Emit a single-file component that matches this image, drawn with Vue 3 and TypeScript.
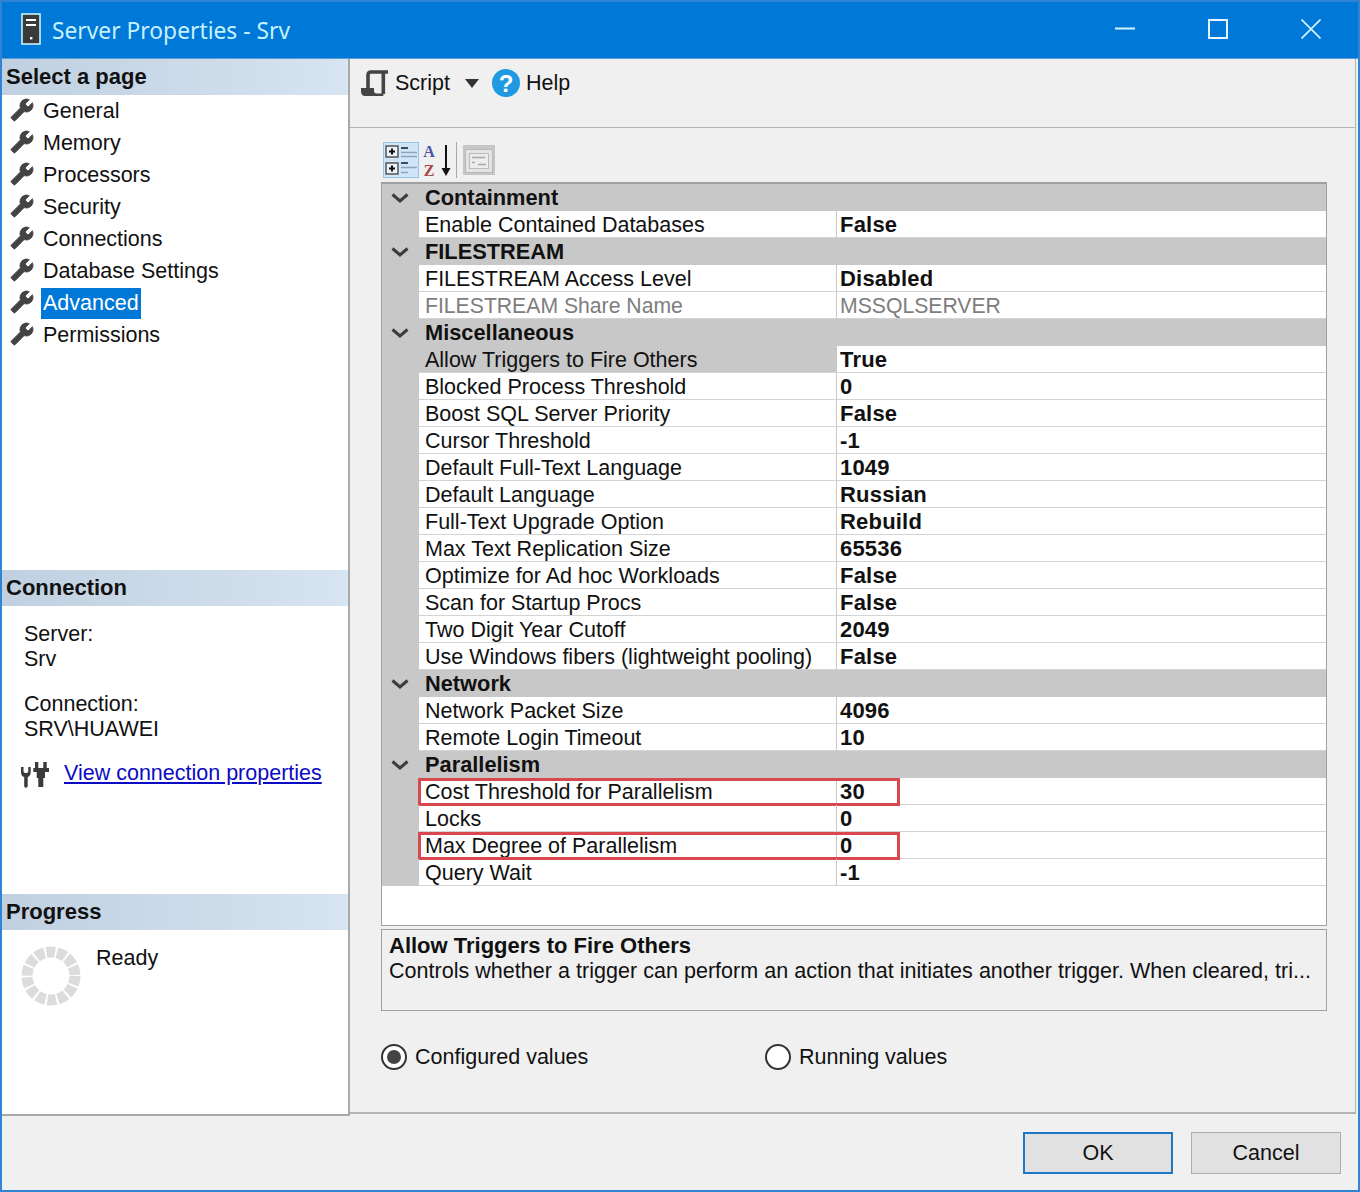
<script setup lang="ts">
type Row = { name: string; value?: string; cat?: boolean; disabled?: boolean; selected?: boolean; mark?: boolean };

const pages: string[] = ['General', 'Memory', 'Processors', 'Security', 'Connections', 'Database Settings', 'Advanced', 'Permissions'];

const rows: Row[] = [
  { name: 'Containment', cat: true },
  { name: 'Enable Contained Databases', value: 'False' },
  { name: 'FILESTREAM', cat: true },
  { name: 'FILESTREAM Access Level', value: 'Disabled' },
  { name: 'FILESTREAM Share Name', value: 'MSSQLSERVER', disabled: true },
  { name: 'Miscellaneous', cat: true },
  { name: 'Allow Triggers to Fire Others', value: 'True', selected: true },
  { name: 'Blocked Process Threshold', value: '0' },
  { name: 'Boost SQL Server Priority', value: 'False' },
  { name: 'Cursor Threshold', value: '-1' },
  { name: 'Default Full-Text Language', value: '1049' },
  { name: 'Default Language', value: 'Russian' },
  { name: 'Full-Text Upgrade Option', value: 'Rebuild' },
  { name: 'Max Text Replication Size', value: '65536' },
  { name: 'Optimize for Ad hoc Workloads', value: 'False' },
  { name: 'Scan for Startup Procs', value: 'False' },
  { name: 'Two Digit Year Cutoff', value: '2049' },
  { name: 'Use Windows fibers (lightweight pooling)', value: 'False' },
  { name: 'Network', cat: true },
  { name: 'Network Packet Size', value: '4096' },
  { name: 'Remote Login Timeout', value: '10' },
  { name: 'Parallelism', cat: true },
  { name: 'Cost Threshold for Parallelism', value: '30', mark: true },
  { name: 'Locks', value: '0' },
  { name: 'Max Degree of Parallelism', value: '0', mark: true },
  { name: 'Query Wait', value: '-1' },
];

const wrench =
  'M22.7 19l-9.1-9.1c.9-2.3.4-5-1.5-6.9-2-2-5-2.4-7.4-1.3L9 6 6 9 1.6 4.7C.4 7.1.9 10.1 2.9 12.1c1.9 1.9 4.6 2.4 6.9 1.5l9.1 9.1c.4.4 1 .4 1.4 0l2.3-2.3c.5-.4.5-1.1.1-1.4z';
</script>

<template>
  <div class="window">
    <header class="titlebar">
      <svg class="server-icon" width="20" height="32" viewBox="0 0 20 32">
        <rect x="1" y="1" width="18" height="30" fill="#3a3a3a" stroke="#c9f3ff" stroke-width="1.6" />
        <rect x="5" y="6" width="10" height="2" fill="#fff" />
        <rect x="5" y="11" width="10" height="2" fill="#fff" />
        <rect x="9" y="24" width="2.4" height="2.4" fill="#fff" />
      </svg>
      <span class="title-text">Server Properties - Srv</span>
      <div class="caption">
        <svg class="cap" width="20" height="20" viewBox="0 0 20 20"><path d="M0 9.5H20" stroke="#d5f3ff" stroke-width="2" /></svg>
        <svg class="cap" width="20" height="20" viewBox="0 0 20 20"><rect x="1" y="1" width="18" height="18" fill="none" stroke="#e3f7ff" stroke-width="2" /></svg>
        <svg class="cap" width="20" height="20" viewBox="0 0 20 20"><path d="M.5.5L19.5 19.5M19.5.5L.5 19.5" stroke="#d5f3ff" stroke-width="1.7" /></svg>
      </div>
    </header>

    <div class="main">
      <aside class="left">
        <div class="sec-head">Select a page</div>
        <ul class="pages">
          <li v-for="p in pages" :key="p" class="page">
            <svg class="wrench" width="24" height="24" viewBox="0 0 24 24"><path :d="wrench" fill="#444" stroke="#444" stroke-width=".8" transform="translate(24 0) scale(-1 1)" /></svg>
            <span class="page-name" :class="{ active: p === 'Advanced' }">{{ p }}</span>
          </li>
        </ul>

        <div class="sec-head">Connection</div>
        <div class="conn">
          <div>Server:</div>
          <div>Srv</div>
          <div class="conn-gap">Connection:</div>
          <div>SRV\HUAWEI</div>
          <div class="conn-link">
            <svg width="29" height="28" viewBox="0 0 29 28">
              <path d="M0 6h2.500v4c0 1.500 1 2 2.400 2s2.400-.5 2.400-2V6h2.400v5c0 3-1.300 4.500-3 5V25a1.700 1.700 0 0 1-3.500 0V16C1.300 15.500 0 14 0 11z" fill="#3a3a3a" />
              <path d="M14 1h3.300v6H22.300V1h3.400v6H28v4H24V17H22.300v9H17.300V17H15.700V11H12.300V7H14z" fill="#3a3a3a" />
            </svg>
            <a class="link">View connection properties</a>
          </div>
        </div>

        <div class="sec-head">Progress</div>
        <div class="progress">
          <svg width="60" height="60" viewBox="0 0 60 60">
            <circle cx="30" cy="30" r="24" fill="none" stroke="#dcdcdc" stroke-width="11" stroke-dasharray="8.8 1.97" />
          </svg>
          <span class="ready">Ready</span>
        </div>
      </aside>

      <section class="right">
        <div class="toolbar">
          <svg width="28" height="28" viewBox="0 0 28 28">
            <path d="M7 20V6Q7 3 10 3H27" fill="none" stroke="#444" stroke-width="3.600" />
            <path d="M22.300 3V25" fill="none" stroke="#444" stroke-width="3.600" />
            <path d="M0 19H13V22C13 23.500 14 24.500 15.500 24.500H22.300V27H4C1.500 27 0 25 0 22.500z" fill="#444" />
          </svg>
          <span class="tool-label">Script</span>
          <svg class="caret" width="14" height="9" viewBox="0 0 14 9"><path d="M0 0H14L7 9z" fill="#333" /></svg>
          <svg class="help" width="28" height="28" viewBox="0 0 28 28">
            <circle cx="14" cy="14" r="14" fill="#1f9ae0" />
            <text x="14" y="23" text-anchor="middle" class="help-q">?</text>
          </svg>
          <span class="tool-label">Help</span>
        </div>

        <div class="content">
          <div class="grid-tools">
            <div class="tool-active">
              <svg width="34" height="34" viewBox="0 0 34 34">
                <g fill="#eaf2fa" stroke="#555" stroke-width="1.500"><rect x="2" y="3" width="12" height="11" /><rect x="2" y="20" width="12" height="11" /></g>
                <path d="M5 8.500H11M8 5.500V11.500M5 25.500H11M8 22.500V28.500" stroke="#111" stroke-width="2" />
                <path d="M17 5H24M17 20H24" stroke="#3c4c5c" stroke-width="2" />
                <path d="M17 9.500H33M17 13.500H33M17 24.500H33M17 29.500H24" stroke="#8ea4ba" stroke-width="1.700" />
              </svg>
            </div>
            <div class="az">
              <div class="az-letters"><span class="az-a">A</span><span class="az-z">Z</span></div>
              <svg class="az-arrow" width="12" height="32" viewBox="0 0 12 32">
                <path d="M6 0V25" stroke="#111" stroke-width="2" />
                <path d="M1.500 23H10.500L6 31z" fill="#111" />
              </svg>
            </div>
            <div class="tool-sep"></div>
            <svg class="pp" width="32" height="30" viewBox="0 0 32 30">
              <rect x="0" y="0" width="32" height="30" fill="#c6c6c6" />
              <rect x="2.500" y="4.500" width="27" height="23" fill="#e4e4e4" stroke="#b9b9b9" />
              <rect x="6.500" y="8.500" width="19" height="15" fill="#ececec" stroke="#bcbcbc" />
              <path d="M9 12.500H22M9 17.500h3M15 19.500H23" fill="none" stroke="#a8a8a8" stroke-width="1.500" />
            </svg>
          </div>

          <div class="grid">
            <template v-for="r in rows" :key="r.name">
              <div v-if="r.cat" class="cat">
                <svg class="chev" width="18" height="10" viewBox="0 0 18 10"><path d="M1.500 1.500L9 8L16.500 1.500" fill="none" stroke="#3c3c3c" stroke-width="3" /></svg>
                <span class="cat-name">{{ r.name }}</span>
              </div>
              <div v-else class="row" :class="{ disabled: r.disabled }">
                <div class="gutter"></div>
                <div class="name" :class="{ selected: r.selected }">{{ r.name }}</div>
                <div class="value">{{ r.value }}</div>
                <div v-if="r.mark" class="mark"></div>
              </div>
            </template>
          </div>

          <div class="desc">
            <div class="desc-title">Allow Triggers to Fire Others</div>
            <div class="desc-text">Controls whether a trigger can perform an action that initiates another trigger. When cleared, tri...</div>
          </div>

          <div class="radios">
            <label class="radio r1"><span class="dot on"></span>Configured values</label>
            <label class="radio"><span class="dot"></span>Running values</label>
          </div>
        </div>
      </section>
    </div>

    <footer class="footer">
      <button class="btn ok">OK</button>
      <button class="btn">Cancel</button>
    </footer>
  </div>
</template>

<style>
html, body { margin: 0; background: #f0f0f0; }
</style>

<style scoped>
.window {
  width: 1360px;
  height: 1192px;
  box-sizing: border-box;
  border: 2px solid #2f84d6;
  display: flex;
  flex-direction: column;
  background: #f0f0f0;
  font-family: "Liberation Sans", Arial, sans-serif;
  font-size: 21.5px;
  color: #111;
  overflow: hidden;
}
.titlebar {
  height: 57px;
  flex: none;
  background: #0078d7;
  display: flex;
  align-items: center;
  padding-left: 19px;
  box-sizing: border-box;
  border-bottom: 1px solid #5b9bd8;
}
.server-icon { margin-top: -2px; }
.title-text {
  margin-left: 11px;
  font-family: "Noto Sans", sans-serif;
  font-size: 22.8px;
  color: #c5f1ff;
  white-space: nowrap;
}
.caption {
  margin-left: auto;
  margin-top: -2px;
  display: flex;
  gap: 73px;
  padding-right: 37px;
}
.main { flex: none; height: 1057px; display: flex; }
.left {
  width: 348px;
  flex: none;
  background: #fff;
  box-sizing: border-box;
  border-right: 2px solid #a9a9a9;
  border-bottom: 2px solid #a9a9a9;
  display: flex;
  flex-direction: column;
}
.sec-head {
  height: 36px;
  flex: none;
  display: flex;
  align-items: center;
  padding-left: 4px;
  background: linear-gradient(90deg, #c0d0e0, #d7e4f1);
  font-weight: 700;
  font-size: 22px;
  color: #111;
}
.pages { list-style: none; margin: 0; padding: 0; height: 475px; flex: none; }
.page { height: 32px; box-sizing: border-box; padding-left: 8px; display: flex; align-items: center; }
.wrench { margin: -2px 7px 0 0; flex: none; }
.page-name { padding: 2px 2px; line-height: 27px; }
.page-name.active { background: #0078d7; color: #fff; }
.conn { height: 288px; flex: none; box-sizing: border-box; padding: 16px 0 0 22px; line-height: 25px; }
.conn-gap { margin-top: 20px; }
.conn-link { display: flex; align-items: flex-start; margin: 19px 0 0 -3px; }
.link { margin-left: 14px; color: #0b0bc4; text-decoration: underline; }
.progress { flex: 1; display: flex; align-items: flex-start; padding: 16px 0 0 19px; }
.ready { margin-left: 15px; line-height: 25px; }
.right { flex: 1; min-width: 0; display: flex; flex-direction: column; box-sizing: border-box; height: 1055px; border-bottom: 2px solid #b4b4b4; border-right: 1px solid #b4b4b4; margin-right: 2px; }
.toolbar {
  height: 69px;
  flex: none;
  box-sizing: border-box;
  border-bottom: 1px solid #b4b4b4;
  display: flex;
  align-items: center;
  padding: 0 0 20px 11px;
}
.tool-label { margin-left: 6px; }
.caret { margin-left: 15px; }
.help { margin-left: 13px; }
.help-q { font: 700 24px "Liberation Sans", sans-serif; fill: #fff; }
.content { flex: 1; padding: 14px 0 0 31px; }
.grid-tools { height: 40px; display: flex; align-items: flex-start; }
.tool-active {
  width: 36px;
  height: 36px;
  background: #cfe5f8;
  box-sizing: border-box;
  border: 1px solid #96c3ea;
  margin-left: 2px;
  display: flex;
  align-items: center;
  justify-content: center;
}
.az { width: 36px; height: 36px; display: flex; box-sizing: border-box; padding: 0 0 0 2px; }
.az-letters {
  width: 16px;
  display: flex;
  flex-direction: column;
  align-items: center;
  font-family: "Liberation Serif", serif;
  font-weight: 700;
  font-size: 16px;
  line-height: 19px;
}
.az-a { color: #4457a8; }
.az-z { color: #a84848; }
.az-arrow { margin: 3px 0 0 3px; }
.tool-sep { width: 1px; height: 36px; background: #a8a8a8; margin: 0 6px 0 1px; }
.pp { margin-top: 3px; }
.grid {
  width: 946px;
  height: 744px;
  box-sizing: border-box;
  border: 1px solid #a0a0a0;
  border-top-width: 2px;
  background: #fff;
}
.cat {
  height: 27px;
  background: #c8c8c8;
  display: flex;
  align-items: center;
  box-sizing: border-box;
  font-weight: 700;
  font-size: 21.800px;
  position: relative;
}
.cat:first-child { padding-top: 1px; }
.chev { margin-left: 9px; flex: none; }
.cat-name { margin-left: 16px; }
.row { height: 27px; display: flex; position: relative; }
.gutter { width: 37px; flex: none; background: #c8c8c8; }
.name {
  width: 417px;
  flex: none;
  box-sizing: border-box;
  padding-left: 6px;
  line-height: 28px;
  border-bottom: 1px solid #d4d4d4;
  white-space: nowrap;
  overflow: hidden;
}
.name.selected { background: #c8c8c8; }
.value {
  flex: 1;
  box-sizing: border-box;
  padding-left: 3px;
  line-height: 28px;
  font-weight: 700;
  font-size: 22px;
  letter-spacing: .2px;
  border-left: 1px solid #c8c8c8;
  border-bottom: 1px solid #d4d4d4;
  overflow: hidden;
}
.disabled .name, .disabled .value { color: #7d7d7d; font-weight: 400; font-size: 21.200px; letter-spacing: 0; }
.mark {
  position: absolute;
  left: 36px;
  top: 0;
  width: 482px;
  height: 28px;
  box-sizing: border-box;
  border: 3px solid #d9484f;
}
.desc {
  width: 946px;
  height: 82px;
  box-sizing: border-box;
  margin-top: 3px;
  border: 1px solid #a0a0a0;
  padding: 3px 0 0 7px;
  line-height: 26px;
}
.desc-title { font-weight: 700; font-size: 22px; margin-bottom: -1px; }
.desc-text { white-space: nowrap; letter-spacing: .03px; }
.radios { display: flex; margin-top: 32px; }
.radio { display: flex; align-items: center; height: 28px; }
.r1 { width: 384px; }
.dot {
  width: 26px;
  height: 26px;
  box-sizing: border-box;
  border: 2px solid #333;
  border-radius: 50%;
  background: #fff;
  margin-right: 8px;
  position: relative;
}
.dot.on::after {
  content: "";
  position: absolute;
  inset: 4px;
  border-radius: 50%;
  background: #444;
}
.footer {
  flex: 1;
  display: flex;
  justify-content: flex-end;
  gap: 18px;
  padding: 16px 17px 0 0;
  align-items: flex-start;
}
.btn {
  width: 150px;
  height: 42px;
  box-sizing: border-box;
  border: 1px solid #adadad;
  background: #e1e1e1;
  font: 21.500px "Liberation Sans", Arial, sans-serif;
  color: #111;
  padding: 0;
}
.btn.ok { border: 2px solid #1f78c4; }
</style>
